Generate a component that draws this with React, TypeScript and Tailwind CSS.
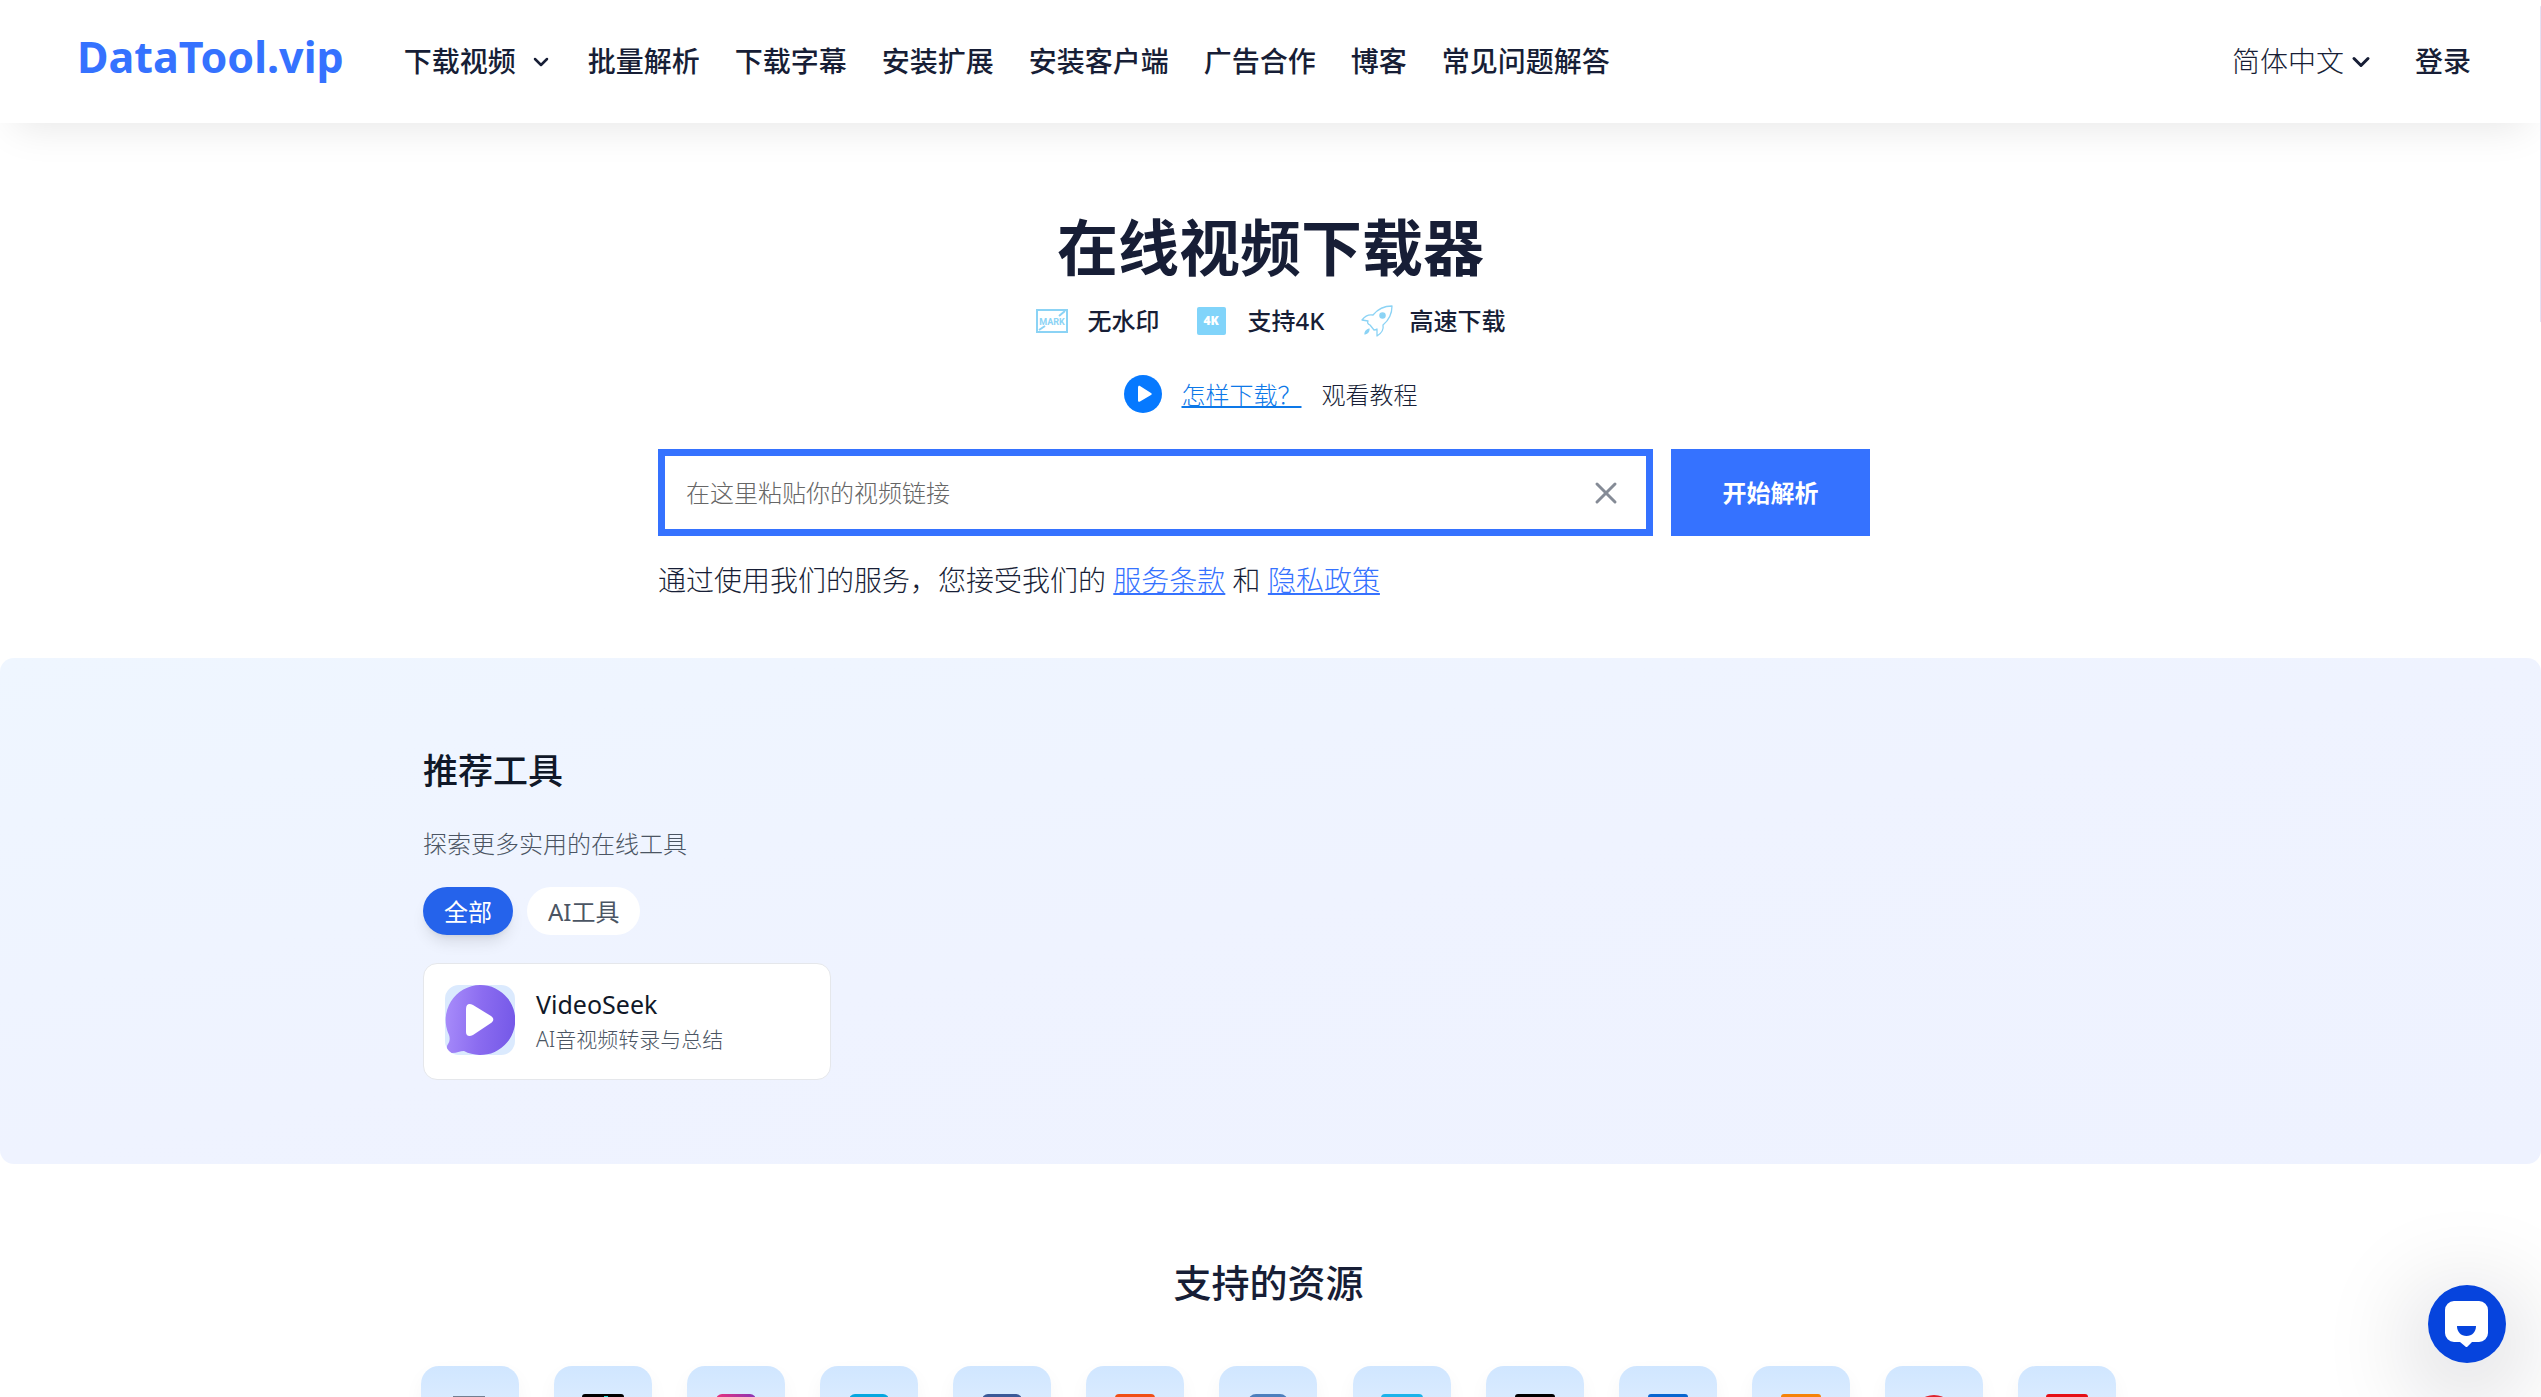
import React from "react";
import { ChevronDown, X } from "lucide-react";

const navItems = ["批量解析", "下载字幕", "安装扩展", "安装客户端", "广告合作", "博客", "常见问题解答"];

function MarkIcon() {
  return (
    <svg className="h-6 w-8" viewBox="0 0 32 24" fill="none" stroke="#8bd3f5" strokeWidth="2">
      <rect x="1" y="1" width="30" height="22" />
      <path d="M3 21l6-4M23 7l6-5" />
      <text x="16" y="15.500" textAnchor="middle" fontSize="9" fontWeight="700" fontFamily="Roboto" fill="#8bd3f5" strokeWidth="0">
        MARK
      </text>
    </svg>
  );
}

function FourKIcon() {
  return (
    <span className="flex h-7 w-[29px] items-center justify-center rounded-xs bg-[#81d4fa] text-xs font-black text-white">4K</span>
  );
}

function RocketIcon() {
  return (
    <svg className="size-8" viewBox="0 0 32 32" fill="none" stroke="#8bd3f5" strokeWidth="1.3" strokeLinejoin="round">
      <path d="M31 1C22 1 16 5 12 10C7 9 4 11 1 15l6 1c-1 2 0 3 2 4l4 5c1 0 2 0 3-1l0 7c5-3 7-6 6-11C28 15 31 9 31 1Z" />
      <circle cx="21.500" cy="10.500" r="2.600" fill="#8bd3f5" />
      <path d="M4 29c0-3 1-4 4-5 0 3-1 4-4 5Z" fill="#8bd3f5" />
    </svg>
  );
}

function VideoSeekLogo() {
  return (
    <svg className="mb-1 size-[70px] rounded-[14px] bg-blue-100" viewBox="0 0 70 70">
      <defs>
        <linearGradient id="vs" x1="0" y1="0.400" x2="1" y2="0.500">
          <stop offset="0" stopColor="#a78bfa" />
          <stop offset="0.500" stopColor="#8b6cf0" />
          <stop offset="1" stopColor="#7559e8" />
        </linearGradient>
      </defs>
      <path
        d="M35 0a35 35 0 1 1-16 66c-4 0-7 2-12 2-4 0-7-5-4-9 2-3 2-6 1-9A35 35 0 0 1 35 0Z"
        fill="url(#vs)"
      />
      <path d="M21 24c0-5 3-6 7-4l18 11c3 2 3 5 0 7L28 50c-4 2-7 1-7-3Z" fill="#fff" />
    </svg>
  );
}

function ChatIcon() {
  return (
    <svg className="size-[46px]" viewBox="0 0 46 46">
      <path
        d="M10 0h25a9 9 0 0 1 9 9v23a9 9 0 0 1-9 9h-7l-5 5-1 0-6-5h-6a9 9 0 0 1-9-9V9a9 9 0 0 1 9-9Z"
        fill="#fff"
      />
      <path d="M13 25h19c0 6-4 10-9.500 10S13 31 13 25Z" fill="#0644dd" />
    </svg>
  );
}

const sources = [
  { name: "Video", icon: <path d="M4 2h32v38H4z" fill="#737f92" /> },
  {
    name: "TikTok",
    icon: (
      <>
        <rect width="42" height="42" rx="3" fill="#000" />
        <path d="M22 2h4c0 4 3 7 7 7v5c-3 0-5-1-7-2v12a9 9 0 1 1-8-9v5a4 4 0 1 0 4 4Z" fill="#25e0dc" />
      </>
    ),
  },
  { name: "Instagram", icon: <rect x="1" width="40" height="42" rx="6" fill="url(#ig)" /> },
  { name: "Bilibili", icon: <rect x="1" width="40" height="42" rx="6" fill="#06a7e0" /> },
  { name: "Facebook", icon: <rect x="1" width="40" height="42" rx="6" fill="#3b5998" /> },
  { name: "Reddit", icon: <rect x="1" width="40" height="42" rx="4" fill="#f04f16" /> },
  { name: "VK", icon: <rect x="1" width="40" height="42" rx="8" fill="#4d7fbd" /> },
  { name: "Vimeo", icon: <rect width="42" height="42" rx="4" fill="#1cb3ea" /> },
  { name: "X", icon: <rect x="1" width="40" height="42" rx="3" fill="#000" /> },
  { name: "Dailymotion", icon: <rect x="1" width="40" height="42" rx="3" fill="#0866d0" /> },
  { name: "OK", icon: <rect x="1" width="40" height="42" rx="3" fill="#f5830a" /> },
  { name: "Pinterest", icon: <circle cx="21" cy="22" r="21" fill="#e0232e" /> },
  { name: "YouTube", icon: <rect width="42" height="42" rx="3" fill="#e50f16" /> },
];

export default function App() {
  return (
    <div className="h-screen overflow-hidden bg-white font-['Noto_Sans','Noto_Sans_CJK_SC',sans-serif] text-[24px] leading-[35px] font-light text-[#171e36]">
      <header className="relative flex h-[123px] items-center justify-between bg-white pr-[70px] pl-[77px] text-[28px] shadow-[0_18px_40px_-14px_rgba(0,0,0,0.1)]">
        <div className="flex items-center gap-[60px]">
          <a href="#" className="pb-[10px] text-[43px] leading-none font-bold text-[#3572ff]">
            DataTool.vip
          </a>
          <nav className="flex items-center gap-[35px] font-medium">
            <button className="flex items-center gap-[13px]">
              下载视频
              <ChevronDown className="size-6" strokeWidth={2.5} />
            </button>
            {navItems.map((item) => (
              <a key={item} href="#">
                {item}
              </a>
            ))}
          </nav>
        </div>
        <div className="flex items-center gap-10">
          <button className="flex items-center gap-[3px]">
            简体中文
            <ChevronDown className="size-7" strokeWidth={2.6} />
          </button>
          <a href="#" className="font-medium">
            登录
          </a>
        </div>
      </header>

      <main>
        <section className="mx-auto flex max-w-[1225px] flex-col pt-[88px] pb-[58px]">
          <h1 className="text-center text-[61px] leading-[74px] font-bold">在线视频下载器</h1>
          <ul className="mt-[18px] flex justify-center gap-[37px] font-medium">
            <li className="flex items-center gap-5">
              <MarkIcon />
              无水印
            </li>
            <li className="flex items-center gap-[22px]">
              <FourKIcon />
              支持4K
            </li>
            <li className="flex items-center gap-4">
              <RocketIcon />
              高速下载
            </li>
          </ul>
          <div className="mt-[37px] flex h-[38px] items-center justify-center gap-5">
            <svg className="size-[38px]" viewBox="0 0 38 38">
              <circle cx="19" cy="19" r="19" fill="#0679ff" />
              <path d="M14 12.500c0-1.500 1-2 2-1.500l11 7c1 .6 1 1.500 0 2l-11 6.500c-1 .6-2 0-2-1Z" fill="#fff" />
            </svg>
            <a href="#" className="text-[#0d78e8] underline decoration-2 underline-offset-2">
              怎样下载？
            </a>
            <span>观看教程</span>
          </div>
          <form className="mt-9 flex h-[87px] gap-[18px] pr-[13px]" onSubmit={(e) => e.preventDefault()}>
            <div className="flex flex-1 items-center border-7 border-[#3572ff] pr-[22px] pl-[21px]">
              <input
                aria-label="视频链接"
                placeholder="在这里粘贴你的视频链接"
                className="min-w-0 flex-1 font-light outline-none placeholder:text-[#666666]"
              />
              <button type="button" aria-label="清除" className="text-[#858b96]">
                <X className="size-9" strokeWidth={2} />
              </button>
            </div>
            <button type="submit" className="w-[199px] bg-[#3572ff] font-bold text-white">
              开始解析
            </button>
          </form>
          <p className="mt-6 text-[28px] leading-10">
            通过使用我们的服务，您接受我们的{" "}
            <a href="#" className="text-[#3572ff] underline decoration-2 underline-offset-2">
              服务条款
            </a>{" "}
            和{" "}
            <a href="#" className="text-[#3572ff] underline decoration-2 underline-offset-2">
              隐私政策
            </a>
          </p>
        </section>

        <section className="rounded-[14px] bg-linear-to-br from-[#eff6ff] via-[#eff3ff] to-[#eef2ff] pt-[88px] pb-[84px]">
          <div className="mx-auto max-w-[1695px]">
            <h2 className="text-[35px] leading-[50px] font-medium text-gray-900">推荐工具</h2>
            <p className="mt-[30px] text-[#4b5563]">探索更多实用的在线工具</p>
            <div className="mt-[26px] flex gap-[14px] font-normal">
              <button className="h-12 rounded-full bg-[#2563eb] px-[21px] text-white shadow-lg">全部</button>
              <button className="h-12 rounded-full bg-white px-[21px] text-[#4b5563]">AI工具</button>
            </div>
            <div className="mt-7 grid grid-cols-4 gap-[21px]">
              <a href="#" className="flex h-[117px] items-center gap-[21px] rounded-[14px] border border-gray-200 bg-white px-[21px]">
                <VideoSeekLogo />
                <span className="flex flex-col">
                  <span className="text-[25px] font-normal text-gray-900">VideoSeek</span>
                  <span className="text-[21px] font-light text-[#4b5563]">AI音视频转录与总结</span>
                </span>
              </a>
            </div>
          </div>
        </section>

        <section className="mx-auto max-w-[1699px] pt-[91px] pr-[4px]">
          <h2 className="text-center text-[38px] leading-[54px] font-medium">支持的资源</h2>
          <svg className="absolute size-0">
            <linearGradient id="ig">
              <stop offset="0" stopColor="#e8317c" />
              <stop offset="1" stopColor="#8a35b5" />
            </linearGradient>
          </svg>
          <ul className="mt-[57px] flex justify-between">
            {sources.map((s) => (
              <li key={s.name}>
                <a
                  href="#"
                  aria-label={s.name}
                  className="flex h-[98px] w-[98px] items-center justify-center rounded-[18px] bg-linear-to-b from-[#d0e6ff] to-[#ecf5ff] shadow-[0_8px_20px_rgba(0,0,0,0.04)]"
                >
                  <svg className="size-[42px]" viewBox="0 0 42 42">
                    {s.icon}
                  </svg>
                </a>
              </li>
            ))}
          </ul>
        </section>
      </main>

      <div className="fixed top-1.5 right-0 h-[316px] w-px rounded-full bg-[#e3e1f5]" />

      <button
        aria-label="在线客服"
        className="fixed right-[35px] bottom-[34px] flex size-[78px] items-center justify-center rounded-full bg-[#0644dd] shadow-[0_20px_100px_10px_rgba(0,10,30,0.2)]"
      >
        <ChatIcon />
      </button>
    </div>
  );
}
